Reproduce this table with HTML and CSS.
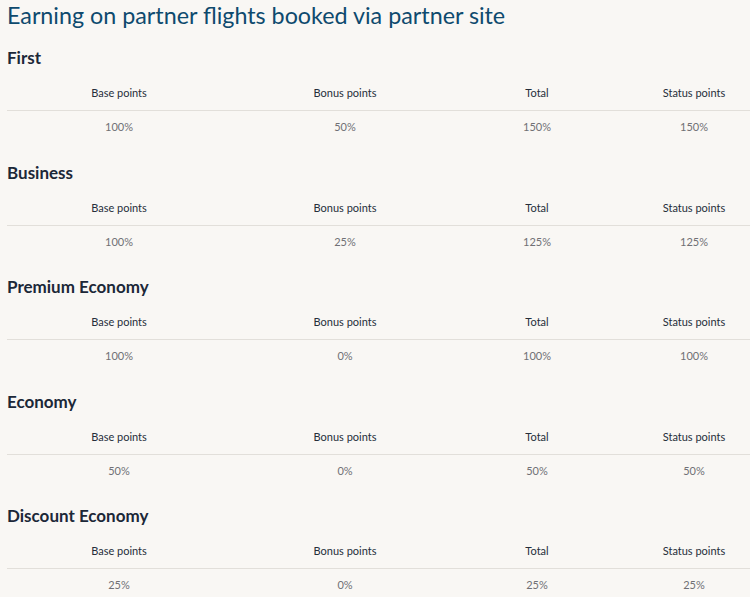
FILE: index.html
```html
<!DOCTYPE html>
<html>
<head>
<meta charset="utf-8">
<link rel="stylesheet" href="styles.css">
</head>
<body>
<div class="page">
  <h1 class="title">Earning on partner flights booked via partner site</h1>

  <section class="cabin">
    <h2 class="cabin-name">First</h2>
    <div class="row head"><span>Base points</span><span>Bonus points</span><span>Total</span><span>Status points</span></div>
    <div class="row vals"><span>100%</span><span>50%</span><span>150%</span><span>150%</span></div>
  </section>

  <section class="cabin">
    <h2 class="cabin-name">Business</h2>
    <div class="row head"><span>Base points</span><span>Bonus points</span><span>Total</span><span>Status points</span></div>
    <div class="row vals"><span>100%</span><span>25%</span><span>125%</span><span>125%</span></div>
  </section>

  <section class="cabin">
    <h2 class="cabin-name">Premium Economy</h2>
    <div class="row head"><span>Base points</span><span>Bonus points</span><span>Total</span><span>Status points</span></div>
    <div class="row vals"><span>100%</span><span>0%</span><span>100%</span><span>100%</span></div>
  </section>

  <section class="cabin">
    <h2 class="cabin-name">Economy</h2>
    <div class="row head"><span>Base points</span><span>Bonus points</span><span>Total</span><span>Status points</span></div>
    <div class="row vals"><span>50%</span><span>0%</span><span>50%</span><span>50%</span></div>
  </section>

  <section class="cabin">
    <h2 class="cabin-name">Discount Economy</h2>
    <div class="row head"><span>Base points</span><span>Bonus points</span><span>Total</span><span>Status points</span></div>
    <div class="row vals"><span>25%</span><span>0%</span><span>25%</span><span>25%</span></div>
  </section>
</div>
</body>
</html>
```

FILE: styles.css
```css
html, body {
  margin: 0;
  padding: 0;
  background: #f9f7f4;
  overflow: hidden;
}
.page {
  padding: 0 0 0 7px;
  font-family: "Lato", "Noto Sans", sans-serif;
  width: 766px;
}
.title {
  margin: 0;
  font-size: 23.3px;
  line-height: 30px;
  font-weight: 400;
  color: #0e4a6e;
}
.cabin {
  padding-top: 17px;
  height: 97.5px;
}
.cabin-name {
  margin: 0;
  font-size: 17px;
  line-height: 22px;
  font-weight: 700;
  color: #1c2838;
}
.row {
  display: grid;
  grid-template-columns: 224px 228px 156px 158px;
  text-align: center;
  font-size: 11px;
  line-height: 16px;
}
.head {
  padding: 16px 0 9px;
  color: #262e3a;
  border-bottom: 1px solid #e2dfda;
}
.vals {
  padding-top: 8px;
  color: #707075;
}
```
